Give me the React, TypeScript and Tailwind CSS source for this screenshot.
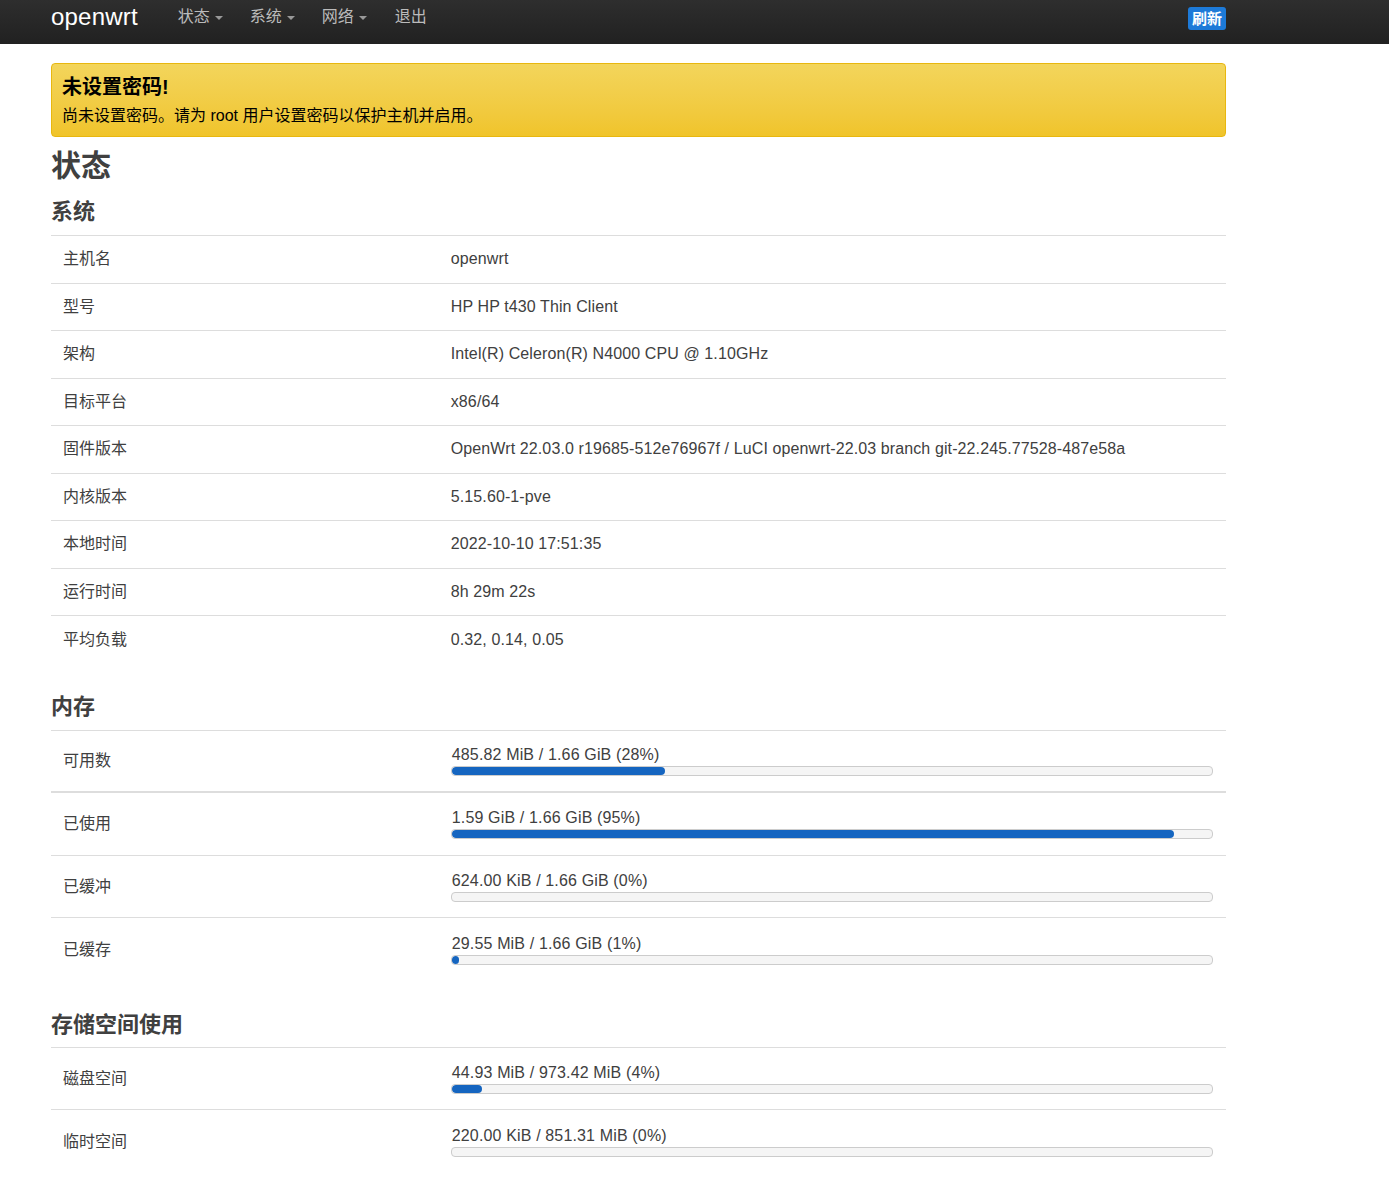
import React from "react";

const font = { fontFamily: '"Liberation Sans", "Noto Sans CJK SC", sans-serif' };

function Caret() {
  return <span className="inline-block ml-[5px] align-middle w-0 h-0 border-l-[4px] border-r-[4px] border-t-[4px] border-l-transparent border-r-transparent border-t-[#999]" />;
}

const sysRows: [string, string][] = [
  ["主机名", "openwrt"],
  ["型号", "HP HP t430 Thin Client"],
  ["架构", "Intel(R) Celeron(R) N4000 CPU @ 1.10GHz"],
  ["目标平台", "x86/64"],
  ["固件版本", "OpenWrt 22.03.0 r19685-512e76967f / LuCI openwrt-22.03 branch git-22.245.77528-487e58a"],
  ["内核版本", "5.15.60-1-pve"],
  ["本地时间", "2022-10-10 17:51:35"],
  ["运行时间", "8h 29m 22s"],
  ["平均负载", "0.32, 0.14, 0.05"],
];

const memRows: [string, string, number][] = [
  ["可用数", "485.82 MiB / 1.66 GiB (28%)", 28],
  ["已使用", "1.59 GiB / 1.66 GiB (95%)", 95],
  ["已缓冲", "624.00 KiB / 1.66 GiB (0%)", 0],
  ["已缓存", "29.55 MiB / 1.66 GiB (1%)", 1],
];

const diskRows: [string, string, number][] = [
  ["磁盘空间", "44.93 MiB / 973.42 MiB (4%)", 4],
  ["临时空间", "220.00 KiB / 851.31 MiB (0%)", 0],
];

function Bar({ text, pct }: { text: string; pct: number }) {
  return (
    <div className="pr-[13px]">
      <div className="text-[16px] leading-[20px] text-[#404040] pl-[1px] tracking-[0.15px]">{text}</div>
      <div className="mt-[1px] h-[10px] rounded-[4px] border border-[#ccc] bg-[#f5f5f5] overflow-hidden">
        {pct > 0 && (
          <div className="h-full rounded-[4px] bg-[#1565c0]" style={{ width: `${Math.max(pct, 1)}%` }} />
        )}
      </div>
    </div>
  );
}

function BarTable({ rows, thickFirst }: { rows: [string, string, number][]; thickFirst: boolean }) {
  return (
    <div className="border-t border-[#ddd]">
      {rows.map(([k, v, p], i) => {
        const last = i === rows.length - 1;
        const cls = last ? "" : i === 0 && thickFirst ? "border-b-2 border-[#ddd]" : "border-b border-[#ddd]";
        return (
          <div key={k} className={`flex items-center h-[62.5px] ${cls}`}>
            <div className="w-[33%] pl-[12px] text-[16px] text-[#404040] pt-[1px]">{k}</div>
            <div className="flex-1 pl-[12px]">
              <Bar text={v} pct={p} />
            </div>
          </div>
        );
      })}
    </div>
  );
}

export default function App() {
  return (
    <div className="min-h-[1180px] bg-white" style={font}>
      <div className="h-[44px] bg-gradient-to-b from-[#2e2e2e] to-[#212121]">
        <div className="ml-[51px] w-[1175px] h-full flex items-start">
          <div className="text-[24px] leading-[34px] text-white pt-0 tracking-[0.2px]">openwrt</div>
          <div className="flex ml-[40px] pt-[5px] text-[16px] leading-[24px] text-[#bbb]">
            <span className="w-[72px]">状态<Caret /></span>
            <span className="w-[72px]">系统<Caret /></span>
            <span className="w-[73px]">网络<Caret /></span>
            <span>退出</span>
          </div>
          <div className="ml-auto mt-[7px] h-[23px] px-[4px] rounded-[3px] bg-[#1d7ad8] text-white font-bold text-[15px] leading-[23px]">刷新</div>
        </div>
      </div>

      <div className="ml-[51px] w-[1175px]">
        <div className="mt-[19px] h-[74px] rounded-[4px] border border-[#e8b70f] bg-gradient-to-b from-[#f3d55b] to-[#f0c42a] px-[10px] pt-[10px] text-black">
          <div className="text-[20px] font-bold leading-[26px]">未设置密码!</div>
          <div className="text-[16px] leading-[20px] mt-[6px]">尚未设置密码。请为 root 用户设置密码以保护主机并启用。</div>
        </div>

        <h2 className="text-[30px] font-bold text-[#404040] leading-[36px] mt-[11px]">状态</h2>
        <h3 className="text-[22px] font-bold text-[#404040] leading-[28px] mt-[14px]">系统</h3>
        <div className="mt-[9px] border-t border-[#ddd]">
          {sysRows.map(([k, v], i) => (
            <div key={k} className={`flex items-center h-[47.5px] text-[16px] text-[#404040] ${i < sysRows.length - 1 ? "border-b border-[#ddd]" : ""}`}>
              <div className="w-[33%] pl-[12px]">{k}</div>
              <div className="flex-1 pl-[12px] tracking-[0.11px]">{v}</div>
            </div>
          ))}
        </div>

        <h3 className="text-[22px] font-bold text-[#404040] leading-[28px] mt-[29px]">内存</h3>
        <div className="mt-[9px]">
          <BarTable rows={memRows} thickFirst />
        </div>

        <h3 className="text-[22px] font-bold text-[#404040] leading-[28px] mt-[30px]">存储空间使用</h3>
        <div className="mt-[8px]">
          <BarTable rows={diskRows} thickFirst={false} />
        </div>
      </div>
    </div>
  );
}
